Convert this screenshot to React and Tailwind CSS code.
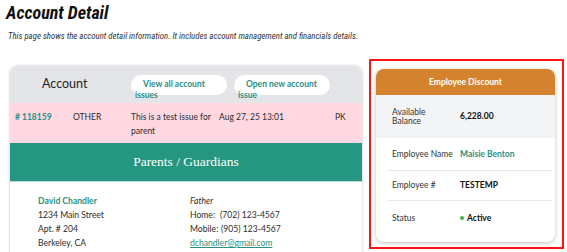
export default function App() {
  const cond = "font-['Roboto_Condensed','Liberation_Sans_Narrow','DejaVu_Sans_Condensed',Roboto,sans-serif] font-stretch-condensed";
  return (
    <div className="w-[567px] h-[252px] overflow-hidden bg-white font-['Lato',sans-serif] text-[#2b2b2b]">
      <div className="pl-[6px] pt-[1px]">
        <h1 className={`${cond} text-[18px] leading-[24px] font-bold italic text-[#111]`}>Account Detail</h1>
        <p className={`${cond} mt-[6px] text-[8.8px] leading-[10px] italic text-[#333] pl-[2px]`}>
          This page shows the account detail information. It includes account management and financials details.
        </p>
      </div>
      <div className="flex items-start mt-[18px]">
        {/* Left card */}
        <div className="ml-[10px] mt-[7px] w-[352px] h-[200px] rounded-t-[8px] bg-white shadow-[0_0_3px_rgba(0,0,0,0.25)] overflow-hidden">
          <div className="h-[37px] bg-[#e4e5e9] flex items-center">
            <div className="pl-[32px] w-[121px] text-[12.5px] text-[#222]">Account</div>
            <div className="flex gap-[7px]">
              <div className="w-[96px] h-[20px] rounded-full bg-white pl-[4px] pt-[4px] indent-[8px] text-[8.5px] leading-[11px] font-bold text-[#2a8f84]">
                View all account<br />issues
              </div>
              <div className="w-[96px] h-[20px] rounded-full bg-white pl-[4px] pt-[4px] indent-[8px] text-[8.5px] leading-[11px] font-bold text-[#2a8f84]">
                Open new account<br />issue
              </div>
            </div>
          </div>
          <div className="h-[40px] bg-[#ffd8e2] grid grid-cols-[58px_58px_88px_116px_1fr] px-[5px] pt-[7px] text-[8.5px] leading-[14px] text-[#2b2b2b]">
            <div className="font-bold text-[#2a8f84]"># 118159</div>
            <div>OTHER</div>
            <div>This is a test issue for<br />parent</div>
            <div>Aug 27, 25 13:01</div>
            <div>PK</div>
          </div>
          <div className="h-[39px] bg-[#25967f] flex items-center justify-center border-b border-[#bcd9d2] font-['Liberation_Serif',serif] text-[13.5px] text-white">
            Parents / Guardians
          </div>
          <div className="flex pt-[12px] text-[8.6px] leading-[14px] text-[#2b2b2b]">
            <div className="pl-[28px] w-[180px]">
              <div className="font-bold text-[#2a8f84]">David Chandler</div>
              <div>1234 Main Street</div>
              <div>Apt. # 204</div>
              <div>Berkeley, CA</div>
            </div>
            <div>
              <div className="italic">Father</div>
              <div className="flex"><span className="w-[30px]">Home:</span><span>(702) 123-4567</span></div>
              <div className="flex"><span className="w-[30px] whitespace-nowrap">Mobile:</span><span className="pl-[1px]">(905) 123-4567</span></div>
              <div className="text-[#2a8f84] underline">dchandler@gmail.com</div>
            </div>
          </div>
        </div>
        {/* Red box */}
        <div className="ml-[7px] w-[195px] h-[190px] border-2 border-[#ff1414] pl-[5px] pr-[7px] pt-[8px]">
          <div className="h-[173px] rounded-[8px] bg-white shadow-[0_1px_4px_rgba(0,0,0,0.25)] overflow-hidden">
            <div className="h-[26px] bg-[#d4822d] flex items-center justify-center text-white font-bold text-[8.5px]">
              Employee Discount
            </div>
            <div className="h-[43px] bg-[#f3f4f6] flex items-center pl-[16px] text-[8.5px]">
              <div className="w-[68px] leading-[9px] text-[#333]">Available<br />Balance</div>
              <div className="font-bold text-[#111]">6,228.00</div>
            </div>
            <div className="pl-[12px] pr-[3px] text-[8.5px] text-[#333]">
              <div className="h-[33px] flex items-center pl-[4px] border-b border-[#e5e7eb]">
                <div className="w-[68px]">Employee Name</div>
                <div className="font-bold text-[#2a8f84]">Maisie Benton</div>
              </div>
              <div className="h-[30px] flex items-center pl-[4px] border-b border-[#e5e7eb]">
                <div className="w-[68px]">Employee #</div>
                <div className="font-bold text-[#111]">TESTEMP</div>
              </div>
              <div className="h-[34px] flex items-center pl-[4px]">
                <div className="w-[68px]">Status</div>
                <div className="flex items-center gap-[3px] font-bold text-[#111]">
                  <span className="w-[4px] h-[4px] rounded-full bg-[#3cb34a]"></span>
                  Active
                </div>
              </div>
            </div>
          </div>
        </div>
      </div>
    </div>
  );
}
